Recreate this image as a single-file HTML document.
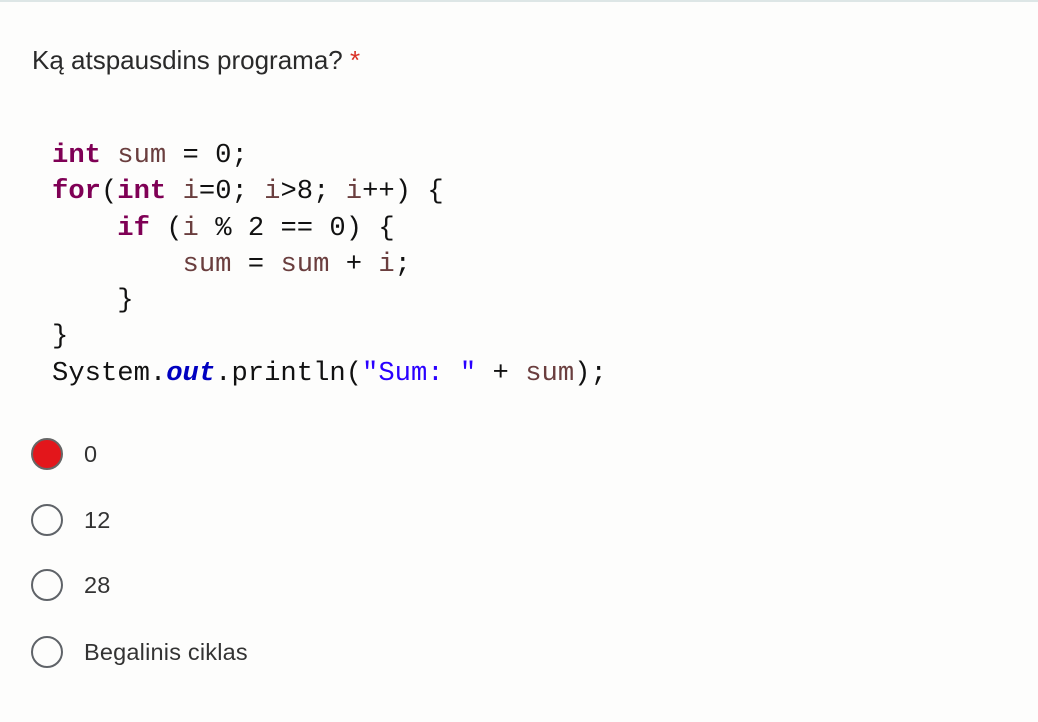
<!DOCTYPE html>
<html><head><meta charset="utf-8"><style>
html,body{margin:0;padding:0}
body{width:1038px;height:722px;background:#fdfdfc;position:relative;overflow:hidden;font-family:"Liberation Sans",sans-serif;color:#202124}
.top{position:absolute;left:0;top:0;width:1038px;height:2px;background:#dde6e6}
.title{position:absolute;left:32px;top:45px;font-size:26px;color:#2a2a2a;letter-spacing:0}
.title span{color:#d93025}
pre{position:absolute;left:52px;top:138px;margin:0;font-family:"Liberation Mono",monospace;font-size:27.2px;line-height:36.3px;color:#111}
.k{color:#7f0055;font-weight:bold}
.v{color:#6a3e3e}
.f{color:#0000c0;font-weight:bold;font-style:italic}
.s{color:#2a00ff}
.r{position:absolute;left:31px;width:28px;height:28px;border:2.5px solid #5f6368;border-radius:50%}
.r.on{background:#e3161b;border-color:#666}
.l{position:absolute;left:84px;font-size:23.5px;color:#333;letter-spacing:0.2px}
</style></head><body>
<div class="top"></div>
<div class="title">Ką atspausdins programa? <span>*</span></div>
<pre><span class="k">int</span> <span class="v">sum</span> = 0;
<span class="k">for</span>(<span class="k">int</span> <span class="v">i</span>=0; <span class="v">i</span>&gt;8; <span class="v">i</span>++) {
    <span class="k">if</span> (<span class="v">i</span> % 2 == 0) {
        <span class="v">sum</span> = <span class="v">sum</span> + <span class="v">i</span>;
    }
}
System.<span class="f">out</span>.println(<span class="s">"Sum: "</span> + <span class="v">sum</span>);</pre>
<div class="r on" style="top:438px"></div><div class="l" style="top:441px">0</div>
<div class="r" style="top:504px"></div><div class="l" style="top:507px">12</div>
<div class="r" style="top:569px"></div><div class="l" style="top:572px">28</div>
<div class="r" style="top:636px"></div><div class="l" style="top:639px">Begalinis ciklas</div>
</body></html>
